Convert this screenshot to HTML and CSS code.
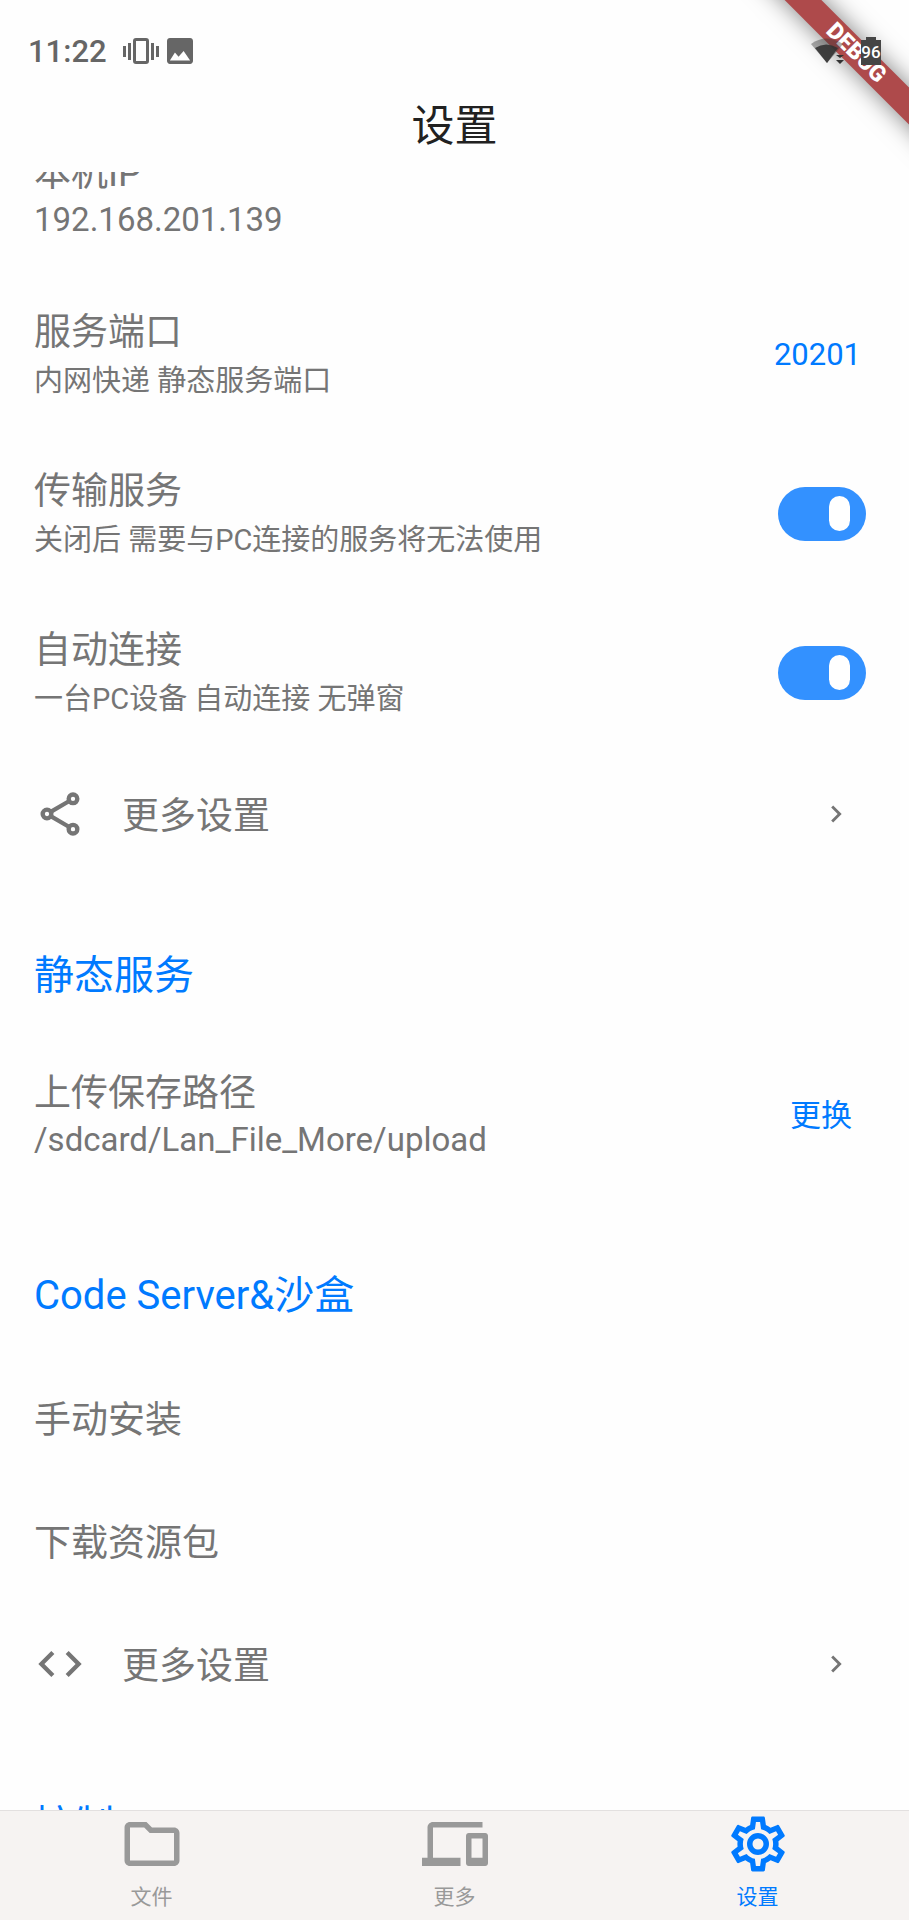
FILE: index.html
```html
<!DOCTYPE html>
<html lang="zh-CN">
<head>
<meta charset="utf-8">
<meta name="viewport" content="width=device-width, initial-scale=1">
<title>设置</title>
<link rel="stylesheet" href="styles.css">
</head>
<body>
<div class="screen">
  <div class="debug-clip"><span class="debug-banner">DEBUG</span></div>

  <div class="status-bar">
    <span class="status-time">11:22</span>
    <svg class="status-vibrate" viewBox="0 0 36 26" aria-hidden="true">
      <path d="M0 8h3v11H0zM5 5h3v17H5zM28 5h3v17h-3zM33 8h3v11h-3z" fill="currentColor"/>
      <rect x="11.500" y="1.500" width="13" height="23" rx="1.500" fill="none" stroke="currentColor" stroke-width="3"/>
    </svg>
    <svg class="status-image" viewBox="3 3 18 18" aria-hidden="true">
      <path d="M21 19V5c0-1.100-.9-2-2-2H5c-1.100 0-2 .9-2 2v14c0 1.100.9 2 2 2h14c1.100 0 2-.9 2-2zM8.500 13l2.500 3L14.500 12l4.500 6.500H5z" fill="currentColor"/>
    </svg>
    <span class="status-right">
      <svg class="status-wifi" viewBox="0 0 34 26" aria-hidden="true">
        <path d="M0 6Q15-5 32 6L28 11 16 25z" fill="#333" fill-opacity=".4"/>
        <path d="M4 10Q15 3 27 10L16 25z" fill="#333" fill-opacity=".9"/>
        <path d="M25 17h8l-4 3zM25 22h8l-4 4z" fill="#333"/>
      </svg>
      <span class="battery">96</span>
    </span>
  </div>

  <header class="app-bar"><h1 class="app-title">设置</h1></header>

  <main class="viewport">
    <div class="list">
      <div class="row">
        <div class="row-text"><span class="row-title">本机IP</span><span class="row-sub row-sub-latin">192.168.201.139</span></div>
      </div>
      <div class="row">
        <div class="row-text"><span class="row-title">服务端口</span><span class="row-sub">内网快递 静态服务端口</span></div>
        <button class="port-button" type="button">20201</button>
      </div>
      <label class="row">
        <span class="row-text"><span class="row-title">传输服务</span><span class="row-sub">关闭后 需要与PC连接的服务将无法使用</span></span>
        <input class="switch" type="checkbox" role="switch" checked>
      </label>
      <label class="row">
        <span class="row-text"><span class="row-title">自动连接</span><span class="row-sub">一台PC设备 自动连接 无弹窗</span></span>
        <input class="switch" type="checkbox" role="switch" checked>
      </label>
      <button class="row row-short" type="button">
        <svg class="row-icon" viewBox="0 0 24 24" fill="none" stroke="currentColor" stroke-width="2" aria-hidden="true">
          <circle cx="18" cy="5" r="2"/><circle cx="6" cy="12" r="2"/><circle cx="18" cy="19" r="2"/>
          <path d="M7.700 11l8.600-5M7.700 13l8.600 5"/>
        </svg>
        <span class="row-title">更多设置</span>
        <svg class="chevron" viewBox="0 0 24 24" aria-hidden="true"><path d="M10 6L8.590 7.410 13.170 12l-4.580 4.590L10 18l6-6z" fill="currentColor"/></svg>
      </button>

      <h2 class="section-title">静态服务</h2>
      <div class="row">
        <div class="row-text"><span class="row-title">上传保存路径</span><span class="row-sub row-sub-latin">/sdcard/Lan_File_More/upload</span></div>
        <button class="change-button" type="button">更换</button>
      </div>

      <h2 class="section-title">Code Server&amp;沙盒</h2>
      <button class="row row-short" type="button"><span class="row-title">手动安装</span></button>
      <button class="row row-short" type="button"><span class="row-title">下载资源包</span></button>
      <button class="row row-short" type="button">
        <svg class="row-icon" viewBox="0 0 24 24" aria-hidden="true"><path d="M9.400 16.600L4.800 12l4.600-4.600L8 6l-6 6 6 6 1.400-1.400zm5.200 0l4.600-4.600-4.600-4.600L16 6l6 6-6 6-1.400-1.400z" fill="currentColor"/></svg>
        <span class="row-title">更多设置</span>
        <svg class="chevron" viewBox="0 0 24 24" aria-hidden="true"><path d="M10 6L8.590 7.410 13.170 12l-4.580 4.590L10 18l6-6z" fill="currentColor"/></svg>
      </button>

      <h2 class="section-title">控制</h2>
    </div>
  </main>

  <nav class="tab-bar">
    <a class="tab" href="#files">
      <svg class="tab-icon" viewBox="0 0 24 24" aria-hidden="true"><path d="M9.170 6l2 2H20v10H4V6h5.170M10 4H4c-1.100 0-1.990.9-1.990 2L2 18c0 1.100.9 2 2 2h16c1.100 0 2-.9 2-2V8c0-1.100-.9-2-2-2h-8l-2-2z" fill="currentColor"/></svg>
      <span>文件</span>
    </a>
    <a class="tab" href="#more">
      <svg class="tab-icon" viewBox="0 0 24 24" aria-hidden="true"><path d="M4 6h18V4H4c-1.100 0-2 .9-2 2v11H0v3h14v-3H4V6zm19 2h-6c-.55 0-1 .45-1 1v10c0 .55.45 1 1 1h6c.55 0 1-.45 1-1V9c0-.55-.45-1-1-1zm-1 9h-4v-7h4v7z" fill="currentColor"/></svg>
      <span>更多</span>
    </a>
    <a class="tab tab-active" href="#settings" aria-current="page">
      <svg class="tab-icon" viewBox="0 0 24 24" aria-hidden="true"><path d="M12,8A4,4 0 0,1 16,12A4,4 0 0,1 12,16A4,4 0 0,1 8,12A4,4 0 0,1 12,8M12,10A2,2 0 0,0 10,12A2,2 0 0,0 12,14A2,2 0 0,0 14,12A2,2 0 0,0 12,10M10,22C9.75,22 9.54,21.82 9.5,21.58L9.13,18.93C8.5,18.68 7.96,18.34 7.44,17.94L4.95,18.95C4.73,19.03 4.46,18.95 4.34,18.73L2.34,15.27C2.21,15.05 2.27,14.78 2.46,14.63L4.57,12.97L4.5,12L4.57,11L2.46,9.37C2.27,9.22 2.21,8.95 2.34,8.73L4.34,5.27C4.46,5.05 4.73,4.96 4.95,5.05L7.44,6.05C7.96,5.66 8.5,5.32 9.13,5.07L9.5,2.42C9.54,2.18 9.75,2 10,2H14C14.25,2 14.46,2.18 14.5,2.42L14.87,5.07C15.5,5.32 16.04,5.66 16.56,6.05L19.05,5.05C19.27,4.96 19.54,5.05 19.66,5.27L21.66,8.73C21.79,8.95 21.73,9.22 21.54,9.37L19.43,11L19.5,12L19.43,13L21.54,14.63C21.73,14.78 21.79,15.05 21.66,15.27L19.66,18.73C19.54,18.95 19.27,19.04 19.05,18.95L16.56,17.95C16.04,18.34 15.5,18.68 14.87,18.93L14.5,21.58C14.46,21.82 14.25,22 14,22H10M11.25,4L10.88,6.61C9.68,6.86 8.62,7.5 7.85,8.39L5.44,7.35L4.69,8.65L6.8,10.2C6.4,11.37 6.4,12.64 6.8,13.8L4.68,15.36L5.43,16.66L7.86,15.62C8.63,16.5 9.68,17.14 10.87,17.38L11.24,20H12.76L13.13,17.39C14.32,17.14 15.37,16.5 16.14,15.62L18.57,16.66L19.32,15.36L17.2,13.81C17.6,12.64 17.6,11.37 17.2,10.2L19.31,8.65L18.56,7.35L16.15,8.39C15.38,7.5 14.32,6.86 13.12,6.62L12.75,4H11.25Z" fill="currentColor"/></svg>
      <span>设置</span>
    </a>
  </nav>
</div>
</body>
</html>
```

FILE: styles.css
```css
* {
  box-sizing: border-box;
}

body {
  margin: 0;
  background: #fefefe;
  color: #757575;
  font-family: Roboto, "Noto Sans CJK SC", sans-serif;
}

button {
  border: 0;
  background: none;
  color: inherit;
  font: inherit;
  text-align: left;
}

.screen {
  position: relative;
  display: flex;
  flex-direction: column;
  height: 100vh;
  overflow: hidden;
}

/* Corner ribbon */
.debug-clip {
  position: absolute;
  top: 0;
  right: 0;
  width: 200px;
  height: 200px;
  overflow: hidden;
}

.debug-banner {
  position: absolute;
  top: 40px;
  right: -97px;
  width: 300px;
  background: #ae4a4b;
  box-shadow: 0 0 24px rgba(0, 0, 0, 0.5);
  color: #fff;
  font-size: 23px;
  font-weight: 900;
  line-height: 26px;
  text-align: center;
  transform: rotate(45deg);
}

/* Status bar */
.status-bar {
  position: relative;
  display: flex;
  align-items: center;
  height: 80px;
  padding: 22px 28px 0;
  color: #666;
}

.status-time {
  padding-top: 2px;
  font-size: 31px;
  font-weight: 500;
  line-height: 36px;
}

.status-vibrate {
  width: 36px;
  height: 26px;
  margin-left: 16px;
}

.status-image {
  width: 26px;
  height: 26px;
  margin-left: 8px;
}

.status-right {
  display: flex;
  align-items: center;
  gap: 16px;
  margin-left: auto;
}

.status-wifi {
  width: 34px;
  height: 26px;
}

.battery {
  display: flex;
  flex-direction: column;
  align-items: center;
  width: 20px;
  padding-top: 3px;
  background:
    linear-gradient(#454545, #454545) center top / 10px 3px no-repeat,
    linear-gradient(#454545, #454545) center bottom / 20px 25px no-repeat;
  color: #fff;
  font-size: 17px;
  font-weight: 500;
  line-height: 25px;
}

/* App bar */
.app-bar {
  display: flex;
  align-items: center;
  justify-content: center;
  height: 92px;
}

.app-title {
  margin: 0;
  color: #212121;
  font-size: 43px;
  font-weight: 400;
  line-height: 60px;
}

/* Settings list, scrolled part of the way down */
.viewport {
  flex: 1;
  min-height: 0;
  overflow: hidden;
}

.list {
  margin-top: -56px;
}

.row {
  display: flex;
  align-items: center;
  width: 100%;
  min-height: 159px;
  padding: 0 34px;
}

.row-short {
  min-height: 123px;
}

.row-text {
  display: flex;
  flex: 1;
  flex-direction: column;
}

.row-title {
  padding-top: 2px;
  font-size: 37px;
  line-height: 50px;
}

.row-short .row-title {
  padding-top: 6px;
}

.row-sub {
  font-size: 29px;
  line-height: 46px;
}

.row-sub-latin {
  padding-bottom: 4px;
  font-size: 33px;
  line-height: 42px;
}

.row-icon {
  width: 52px;
  height: 52px;
  margin-right: 36px;
}

.chevron {
  width: 34px;
  height: 34px;
  margin-right: 22px;
  margin-left: auto;
}

.port-button,
.change-button {
  color: #007aff;
  font-size: 31px;
  line-height: 44px;
}

.port-button {
  padding: 0 14px;
}

.change-button {
  padding: 0 23px;
}

.switch {
  display: flex;
  align-items: center;
  width: 88px;
  height: 54px;
  margin: 0 9px 0 0;
  padding-left: 51px;
  border-radius: 27px;
  background: #3391ff;
  appearance: none;
}

.switch::before {
  width: 21px;
  height: 35px;
  border-radius: 11px;
  background: #fff;
  content: "";
}

.switch:not(:checked) {
  padding-left: 16px;
  background: #ccc;
}

.section-title {
  margin: 0;
  padding: 72px 34px 31px;
  color: #007aff;
  font-size: 40px;
  font-weight: 400;
  line-height: 58px;
}

/* Bottom tabs */
.tab-bar {
  position: relative;
  display: flex;
  height: 110px;
  border-top: 1px solid #e3e0e0;
  background: #f6f3f2;
}

.tab {
  display: flex;
  flex: 1;
  flex-direction: column;
  align-items: center;
  color: #999;
  font-size: 21px;
  line-height: 40px;
  text-decoration: none;
}

.tab-active {
  color: #007aff;
}

.tab-icon {
  width: 66px;
  height: 66px;
}
```
